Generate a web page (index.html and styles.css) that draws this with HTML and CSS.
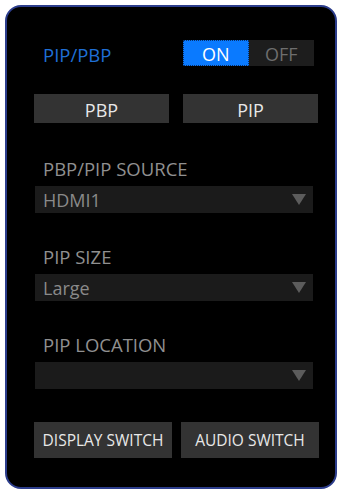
FILE: index.html
```html
<!DOCTYPE html>
<html lang="en">
<head>
    <meta charset="UTF-8">
    <meta name="viewport" content="width=device-width, initial-scale=1.0">
    <title>PIP/PBP</title>
    <link rel="stylesheet" href="styles.css">
</head>
<body>

<div class="panel">
    <!-- 开关行 -->
    <div class="toggle-row">
        <div class="title">PIP/PBP</div>
        <div class="toggle">
            <div class="toggle-on">ON</div>
            <div class="toggle-off">OFF</div>
        </div>
    </div>

    <div class="mode-buttons">
        <button class="btn mode-btn">PBP</button>
        <button class="btn mode-btn">PIP</button>
    </div>

    <div class="field">
        <div class="field-label">PBP/PIP SOURCE</div>
        <div class="select">
            <span>HDMI1</span>
            <span class="arrow"></span>
        </div>
    </div>

    <div class="field">
        <div class="field-label">PIP SIZE</div>
        <div class="select">
            <span>Large</span>
            <span class="arrow"></span>
        </div>
    </div>

    <div class="field">
        <div class="field-label">PIP LOCATION</div>
        <div class="select">
            <span></span>
            <span class="arrow"></span>
        </div>
    </div>

    <div class="switch-buttons">
        <button class="btn switch-btn">DISPLAY SWITCH</button>
        <button class="btn switch-btn">AUDIO SWITCH</button>
    </div>
</div>

</body>
</html>
```

FILE: styles.css
```css
body {
    margin: 0;
    background-color: #fff;
    font-family: 'Open Sans', 'Noto Sans', sans-serif;
}

.panel {
    box-sizing: border-box;
    width: 332px;
    height: 484px;
    margin: 5px 0 0 5px;
    padding: 33px 0 0 27px;
    background-color: #000;
    border: 2px solid #2c3d8c;
    border-radius: 16px;
    display: flex;
    flex-direction: column;
}

.toggle-row {
    width: 280px;
    height: 26px;
    display: flex;
    justify-content: space-between;
    align-items: flex-start;
}

.title {
    margin-top: 5px;
    padding-left: 9px;
    color: #1f6fd6;
    font-size: 18.5px;
    line-height: 20px;
}

.toggle {
    display: flex;
    height: 26px;
    width: 131px;
    background-color: #1d1d1d;
}

.toggle-on,
.toggle-off {
    flex: 1;
    display: flex;
    justify-content: center;
    align-items: center;
    padding-top: 1px;
    font-size: 18px;
    line-height: 20px;
}

.toggle-on {
    background-color: #0a7aff;
    color: #fff;
    outline: 1px dotted #06306b;
    outline-offset: -1px;
}

.toggle-off {
    color: #6e6e6e;
}

.btn {
    padding: 0;
    border: none;
    background-color: #333;
    color: #e8e8e8;
    font-family: 'Open Sans', 'Noto Sans', sans-serif;
    line-height: 20px;
    cursor: pointer;
}

.mode-buttons {
    display: flex;
    gap: 14px;
    margin-top: 28px;
}

.mode-btn {
    width: 135px;
    height: 29px;
    padding-top: 2px;
    font-size: 18px;
}

.field {
    display: flex;
    flex-direction: column;
    margin-top: 34px;
}

.mode-buttons + .field {
    margin-top: 36px;
}

.field-label {
    padding-left: 9px;
    margin-bottom: 7px;
    color: #909090;
    font-size: 18.5px;
    line-height: 20px;
}

.select {
    box-sizing: border-box;
    width: 278px;
    height: 27px;
    margin-left: 1px;
    padding: 0 7px 0 8px;
    display: flex;
    justify-content: space-between;
    align-items: center;
    background-color: #1b1b1b;
    color: #8a8a8a;
    font-size: 18px;
    line-height: 20px;
}

.arrow {
    width: 0;
    height: 0;
    border-left: 7px solid transparent;
    border-right: 7px solid transparent;
    border-top: 11px solid #5c5c5c;
}

.switch-buttons {
    display: flex;
    gap: 9px;
    margin-top: 33px;
}

.switch-btn {
    width: 138px;
    height: 36px;
    font-size: 15.5px;
}
```
